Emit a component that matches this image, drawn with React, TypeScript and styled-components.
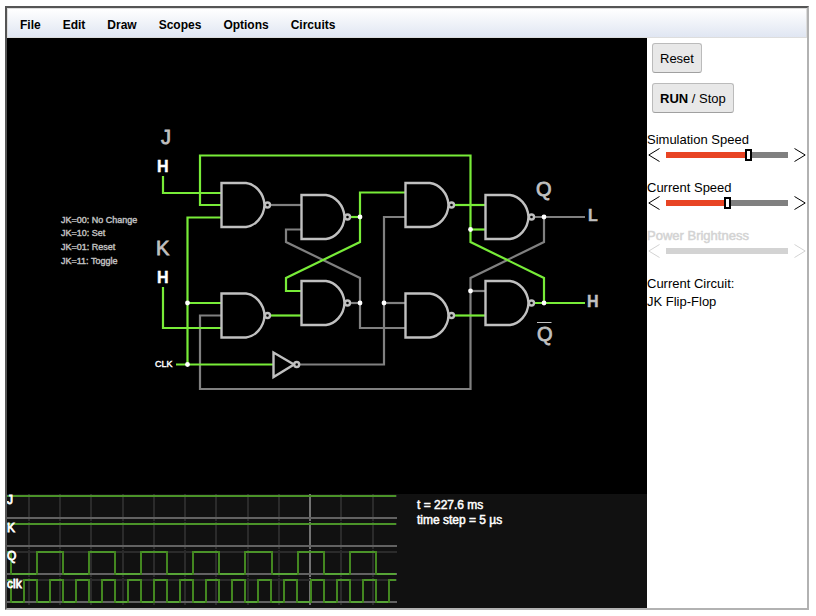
import React, { useState } from "react";
import styled, { createGlobalStyle, css } from "styled-components";

const GREEN = "#78ec38";
const IDLE = "#808080";
const PART = "#c0c0c0";

const GlobalStyle = createGlobalStyle`
  *, *::before, *::after { box-sizing: border-box; }
  body {
    margin: 0;
    background: #fff;
    font-family: "Liberation Sans", Arial, sans-serif;
    font-size: 13px;
    line-height: 18px;
    color: #000;
  }
`;

const Page = styled.div`
  display: flex;
  height: 100vh;
  padding: 6px 7px 6px 5px;
`;

const Frame = styled.div`
  flex: 1;
  display: flex;
  flex-direction: column;
  min-width: 0;
  border: 2px solid;
  border-color: #555 #b2b2b2 #b2b2b2 #555;
`;

const MenuBar = styled.nav`
  display: flex;
  flex: none;
  height: 30px;
  padding-left: 1px;
  border: 1px solid #ddd;
  background: linear-gradient(#fff, #e0e6f2);
`;

const MenuItem = styled.button`
  padding: 3px 11px 0;
  border: 0;
  background: none;
  font: bold 12px "Liberation Sans", Arial, sans-serif;
  color: #000;
`;

const Body = styled.div`
  flex: 1;
  display: flex;
  min-height: 0;
`;

const Workspace = styled.main`
  flex: 1;
  display: flex;
  flex-direction: column;
  min-width: 0;
  background: #000;
`;

const Circuit = styled.svg`
  flex: 1;
  display: block;
  width: 100%;
  min-height: 0;
  font-family: "Liberation Sans", Arial, sans-serif;
`;

const Scopes = styled.section`
  display: flex;
  flex: none;
  gap: 20px;
  height: 114px;
  background: #111;
`;

const ScopePlot = styled.svg`
  flex: none;
  display: block;
  width: 390px;
  height: 114px;
  font-family: "Liberation Sans", Arial, sans-serif;
`;

const ScopeInfo = styled.div`
  padding-top: 4px;
  font-size: 12px;
  line-height: 15px;
  color: #fff;
  -webkit-text-stroke: 0.5px #fff;
`;

const Sidebar = styled.aside`
  flex: none;
  display: flex;
  flex-direction: column;
  align-items: stretch;
  width: 160px;
  background: #fff;
`;

const Buttons = styled.div`
  display: flex;
  flex-direction: column;
  align-items: flex-start;
  gap: 10px;
  padding: 5px 5px 18px;
`;

const PushButton = styled.button`
  height: 30px;
  padding: 0 7px;
  border: 1px solid #bbb;
  border-bottom-color: #a0a0a0;
  border-radius: 3px;
  background: #e8e8e8;
  font: 13px "Liberation Sans", Arial, sans-serif;
  color: #000;
`;

const Control = styled.div<{ $off?: boolean }>`
  margin-bottom: 18px;
  color: ${(p) => (p.$off ? "#d3d3d3" : "#000")};
  ${(p) =>
    p.$off &&
    css`
      -webkit-text-stroke: 0.5px #d3d3d3;
    `}
`;

const ControlLabel = styled.label`
  display: block;
`;

const SliderRow = styled.div`
  display: flex;
  align-items: center;
  gap: 6px;
  height: 12px;
  padding: 0 1px;
`;

const Arrow = styled.button`
  flex: none;
  display: flex;
  width: 12px;
  height: 14px;
  padding: 0;
  border: 0;
  background: none;
  color: inherit;
`;

const Slider = styled.input<{ $fill: number }>`
  flex: 1;
  appearance: none;
  min-width: 0;
  height: 12px;
  margin: 0;
  background: linear-gradient(
      to right,
      #e84424 ${(p) => p.$fill}%,
      #808080 ${(p) => p.$fill}%
    )
    center / 100% 6px no-repeat;

  &::-webkit-slider-thumb {
    appearance: none;
    width: 7px;
    height: 12px;
    border: 2px solid #000;
    background: #fff;
  }

  &:disabled {
    background: linear-gradient(#d3d3d3, #d3d3d3) center / 100% 6px no-repeat;
  }

  &:disabled::-webkit-slider-thumb {
    visibility: hidden;
  }
`;

const CurrentCircuit = styled.p`
  margin: 0;
`;

function LabeledSlider(props: { id: string; label: string; initial: number; off?: boolean }) {
  const { id, label, initial, off } = props;
  const [value, setValue] = useState(initial);
  const step = (by: number) => setValue((v) => Math.min(100, Math.max(0, v + by)));
  return (
    <Control $off={off}>
      <ControlLabel htmlFor={id}>{label}</ControlLabel>
      <SliderRow>
        <Arrow disabled={off} aria-label={`Decrease ${label}`} onClick={() => step(-1)}>
          <svg width="12" height="14" fill="none" stroke="currentColor">
            <path d="M11.5 0.5 L0.8 7 L11.5 13.5" />
          </svg>
        </Arrow>
        <Slider
          id={id}
          type="range"
          min={0}
          max={100}
          value={value}
          disabled={off}
          $fill={value}
          onChange={(e) => setValue(Number(e.target.value))}
        />
        <Arrow disabled={off} aria-label={`Increase ${label}`} onClick={() => step(1)}>
          <svg width="12" height="14" fill="none" stroke="currentColor">
            <path d="M0.5 0.5 L11.2 7 L0.5 13.5" />
          </svg>
        </Arrow>
      </SliderRow>
    </Control>
  );
}

const idleWires = [
  "M270 205 H301",
  "M301 229.5 H286 V242 L360 278 V328 H405",
  "M350 303 H360",
  "M405 217 H384 V364.5 H299",
  "M384 303 H405",
  "M585 217 H534",
  "M544 217 V242 L470.5 278 V389 H200 V315.5 H221",
  "M470.5 291 H485",
];

const liveWires = [
  "M163 176 V193 H221",
  "M221 205 H200 V155.5 H470.5 V242 L544 278 V303",
  "M221 217.5 H187.5 V364.5",
  "M187.5 303 H221",
  "M163 287 V328 H221",
  "M176 364.5 H273",
  "M270 315.5 H301",
  "M350 217 H360",
  "M405 192.5 H360 V242 L286 278 V291 H301",
  "M454 205 H485",
  "M454 315.5 H485",
  "M470.5 229.5 H485",
  "M534 303 H585",
];

const gates = [
  [221, 205],
  [301, 217],
  [221, 315.5],
  [301, 303],
  [405, 205],
  [405, 315.5],
  [485, 217],
  [485, 303],
];

const joints = [
  [544, 217],
  [544, 303],
  [470.5, 229.5],
  [470.5, 291],
  [360, 217],
  [360, 303],
  [384, 303],
  [187.5, 303],
  [187.5, 364.5],
];

function NandGate({ x, y }: { x: number; y: number }) {
  return (
    <g transform={`translate(${x} ${y})`}>
      <path d="M0.5 -22 H25 C34 -21 43 -12 43.5 0 C43 12 34 21 25 22 H0.5 Z" />
      <circle cx="46.5" cy="0" r="2.5" />
    </g>
  );
}

function CircuitDrawing() {
  return (
    <Circuit viewBox="7 38 640 456" role="img" aria-label="JK Flip-Flop">
      <g fill="none" stroke={IDLE} strokeWidth="2.2">
        {idleWires.map((d) => (
          <path key={d} d={d} />
        ))}
      </g>
      <g fill="none" stroke={GREEN} strokeWidth="2.2">
        {liveWires.map((d) => (
          <path key={d} d={d} />
        ))}
      </g>
      <g fill="#000" stroke={PART} strokeWidth="2.4">
        {gates.map(([x, y]) => (
          <NandGate key={`${x},${y}`} x={x} y={y} />
        ))}
        <path d="M273.5 352.5 V377 L294 364.5 Z" />
        <circle cx="296.7" cy="364.5" r="2.5" />
      </g>
      <g fill="#fff">
        {joints.map(([x, y]) => (
          <circle key={`${x},${y}`} cx={x} cy={y} r="2.4" />
        ))}
      </g>
      <g fill={PART} stroke={PART} strokeWidth="0.8" fontSize="20">
        <text x="161" y="144">J</text>
        <text x="156" y="255">K</text>
        <text x="536" y="196">Q</text>
        <text x="537" y="341">Q</text>
        <path d="M537 322.5 H551.5" strokeWidth="1" />
      </g>
      <g fontSize="16" fontWeight="bold" fill={PART} stroke={PART} strokeWidth="0.4">
        <text x="157" y="172" fill="#fff" stroke="#fff">H</text>
        <text x="157" y="283" fill="#fff" stroke="#fff">H</text>
        <text x="588" y="221">L</text>
        <text x="587" y="307">H</text>
      </g>
      <g fontSize="9" fill={PART} stroke={PART} strokeWidth="0.4">
        <text x="61" y="223">JK=00: No Change</text>
        <text x="61" y="236">JK=10: Set</text>
        <text x="61" y="250">JK=01: Reset</text>
        <text x="61" y="264">JK=11: Toggle</text>
        <text x="155" y="367" fill="#fff" stroke="#fff">CLK</text>
      </g>
    </Circuit>
  );
}

const gridLines = [22, 53, 84, 116, 147, 178, 209, 241, 272, 334, 366];
const qEdges = [4, 30, 56, 82, 108, 134, 160, 186, 212, 238, 265, 291, 317, 343, 369];
const clockEdges = [
  4, 17, 30, 43, 56, 69, 82, 95, 108, 121, 134, 147, 160, 173, 186, 199, 212, 225, 238, 251, 264,
  277, 290, 304, 317, 330, 343, 356, 369, 382,
];

const traces = [
  { name: "J", edges: [] as number[] },
  { name: "K", edges: [] as number[] },
  { name: "Q", edges: qEdges },
  { name: "clk", edges: clockEdges },
];

function Trace({ name, edges, top }: { name: string; edges: number[]; top: number }) {
  const points = [0, ...edges, 389];
  return (
    <g transform={`translate(0 ${top})`} strokeWidth="2" fill="none">
      {gridLines.map((x) => (
        <path key={x} d={`M${x} 0 V27`} stroke="#2b2b2b" />
      ))}
      <path d="M303 0 V27" stroke="#727272" />
      <path d="M0 2 H390" stroke="#2b2b2b" />
      <path d="M0 24 H390" stroke="#626262" />
      {points.slice(1).map((x, i) => (
        <path
          key={`level-${x}`}
          d={`M${points[i]} ${i % 2 ? 24 : 2} H${x}`}
          stroke={i % 2 ? "#57a437" : "#4b9329"}
        />
      ))}
      {edges.map((x) => (
        <path key={x} d={`M${x} 1 V25`} stroke="#438720" />
      ))}
      <text x="0" y="10" fontSize="12" fill="#fff" stroke="#fff" strokeWidth="0.8">
        {name}
      </text>
    </g>
  );
}

export default function App() {
  return (
    <Page>
      <GlobalStyle />
      <Frame>
        <MenuBar>
          {["File", "Edit", "Draw", "Scopes", "Options", "Circuits"].map((name) => (
            <MenuItem key={name}>{name}</MenuItem>
          ))}
        </MenuBar>
        <Body>
          <Workspace>
            <CircuitDrawing />
            <Scopes>
              <ScopePlot viewBox="0 0 390 114">
                {traces.map((t, i) => (
                  <Trace key={t.name} name={t.name} edges={t.edges} top={i * 28} />
                ))}
              </ScopePlot>
              <ScopeInfo>
                <div>t = 227.6 ms</div>
                <div>time step = 5 µs</div>
              </ScopeInfo>
            </Scopes>
          </Workspace>
          <Sidebar>
            <Buttons>
              <PushButton>Reset</PushButton>
              <PushButton>
                <strong>RUN</strong> / Stop
              </PushButton>
            </Buttons>
            <LabeledSlider id="sim-speed" label="Simulation Speed" initial={69} />
            <LabeledSlider id="current-speed" label="Current Speed" initial={50} />
            <LabeledSlider id="brightness" label="Power Brightness" initial={50} off />
            <CurrentCircuit>
              Current Circuit:
              <br />
              JK Flip-Flop
            </CurrentCircuit>
          </Sidebar>
        </Body>
      </Frame>
    </Page>
  );
}
